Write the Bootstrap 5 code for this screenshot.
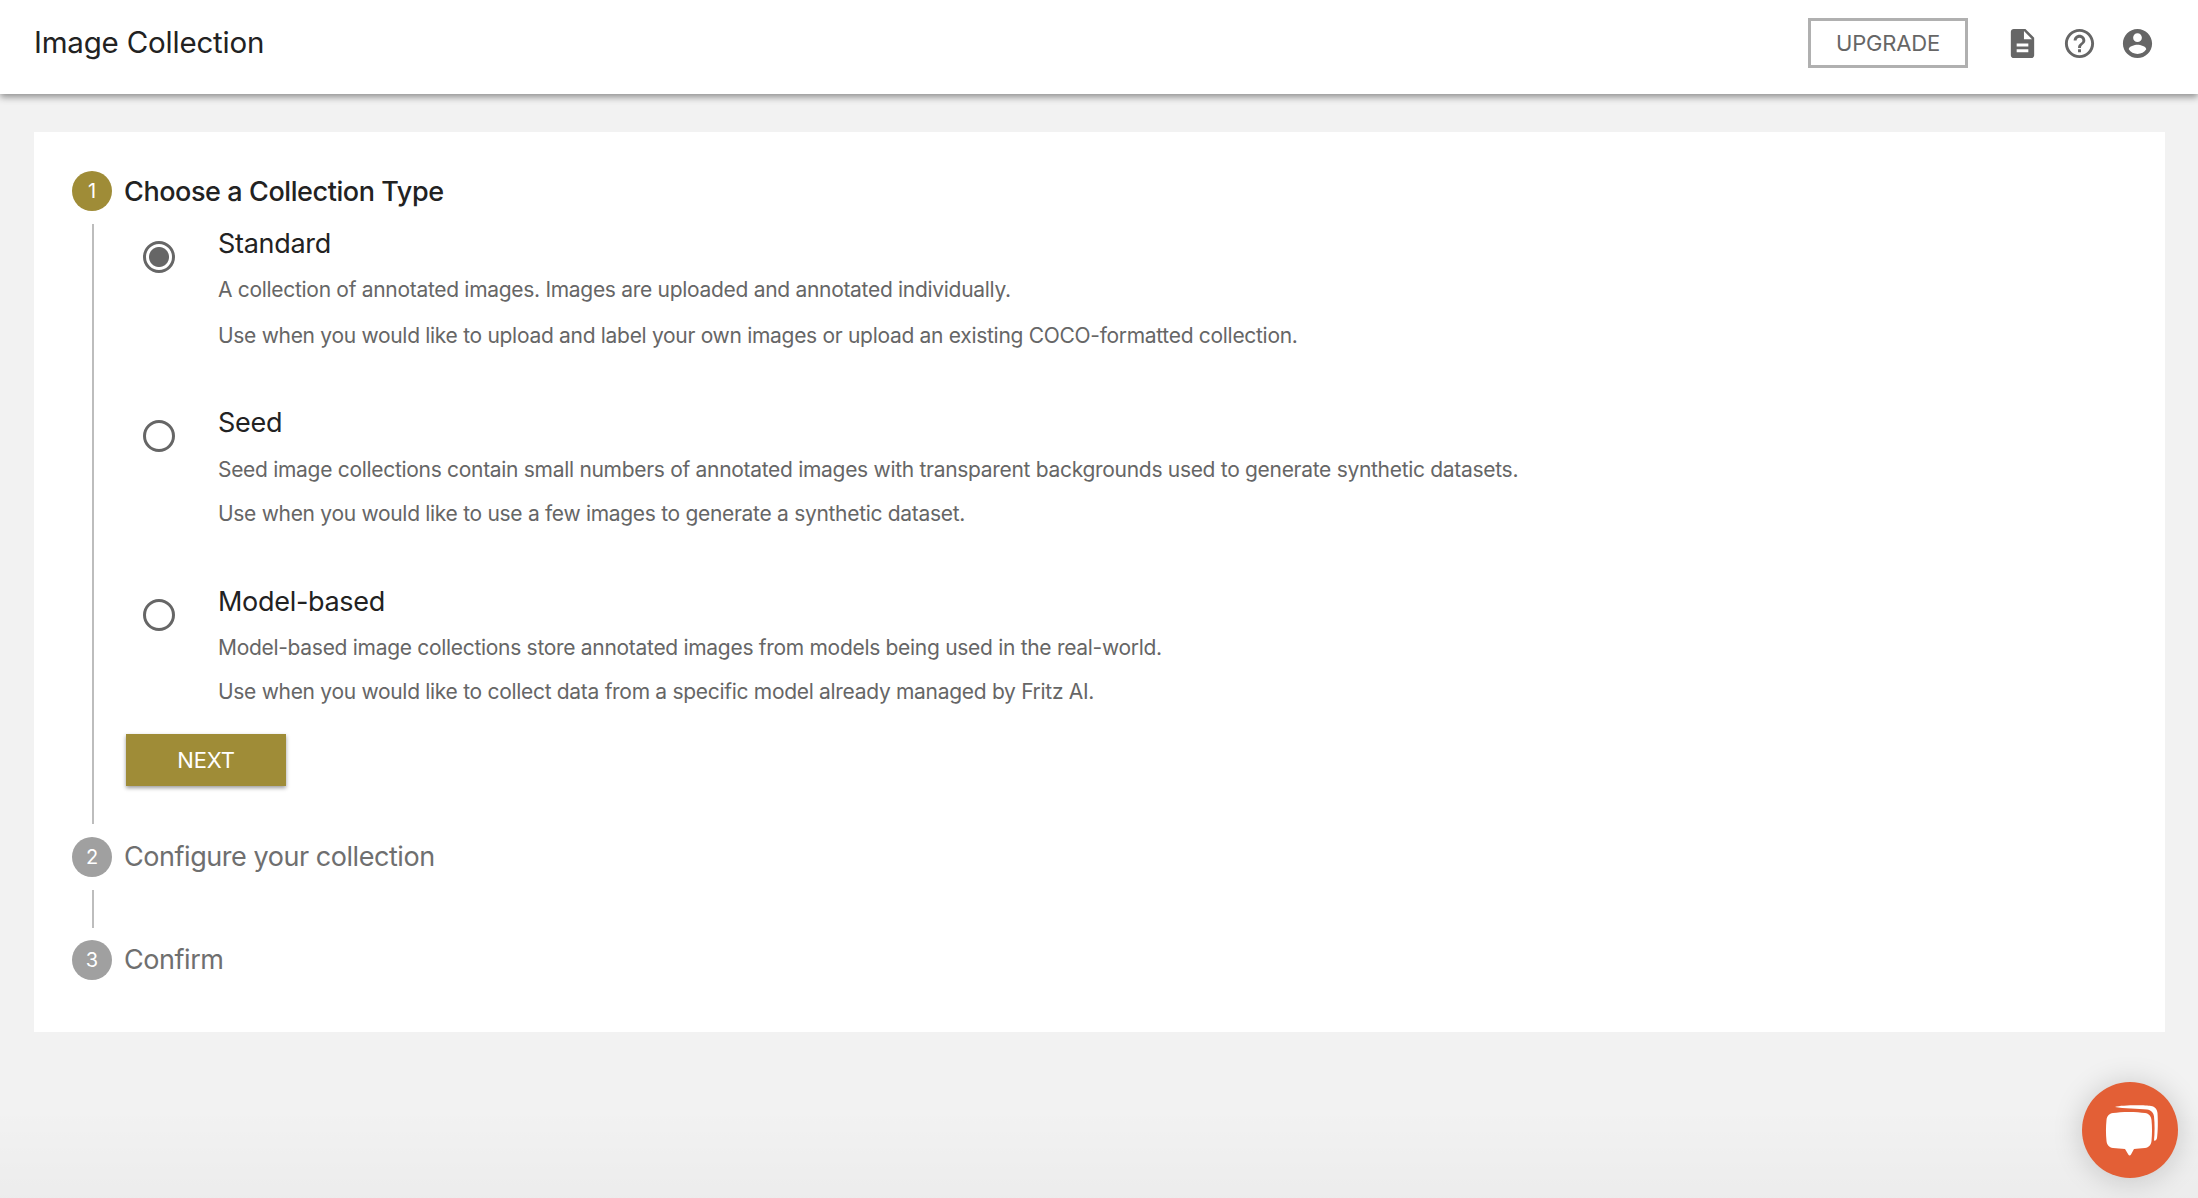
<!DOCTYPE html>
<html lang="en">
<head>
<meta charset="utf-8">
<title>Image Collection</title>
<link href="https://cdn.jsdelivr.net/npm/bootstrap@5.3.0/dist/css/bootstrap.min.css" rel="stylesheet">
<style>
html,body{height:100%}
body{background:#f2f2f2;font-family:Inter,"Liberation Sans",sans-serif;overflow:hidden;position:relative}
.app-head{height:94px;background:#fff;box-shadow:0 3px 7px rgba(0,0,0,.42);padding:0 34px 8px;position:relative}
.app-title{font-size:29.5px;color:#222;margin:0;font-weight:400;letter-spacing:-.2px}
.up-btn{width:160px;height:50px;border:3px solid #b0b0b0;border-radius:0;color:#666;font-size:22px;padding:0;margin-right:36.5px;background:#fff;letter-spacing:-.2px}
.head-icons{gap:22.5px;margin-right:9.5px}
.head-icons svg{width:35px;height:35px;display:block;fill:#666}
.sheet{margin:38px 33px 0 34px;height:900px;background:#fff;padding:40px 38px}
.step-row{gap:12px;height:38px}
.step-num{width:40px;height:40px;border-radius:50%;background:#a0a0a0;color:#fff;font-size:20px;flex:none}
.step-num.on{background:#9f8c37}
.step-name{font-size:27px;color:#6f6f6f;letter-spacing:-.45px}
.step-name.on{color:#222;font-weight:500;letter-spacing:-.42px;padding-top:2px}
.rail{margin-left:20px;border-left:2px solid #bdbdbd}
.rail-main{margin-top:14px;height:600px;padding:0 0 0 32px}
.rail-small{margin-top:14px;height:38px;margin-bottom:13px}
.step-gap{margin-top:14px}
.opt{padding-left:17px}
.opt-a{height:178.500px}
.opt-b{height:179.500px}
.opt-c{height:152px}
.opt-radio{width:32px;height:32px;border:3px solid #666;border-radius:50%;flex:none;margin:17px 43px 0 0;background:#fff}
.opt-radio.sel{background:radial-gradient(circle,#666 0 9.5px,#fff 10.5px)}
.opt-name{font-size:27px;line-height:40px;color:#222;letter-spacing:-.3px}
.opt-desc{font-size:21px;line-height:32px;color:#666;margin:14px 0 0;letter-spacing:-.3px}
.opt-name + .opt-desc{margin-top:10px}
.opt-b .opt-name + .opt-desc{margin-top:11px}
.opt-b .opt-desc + .opt-desc,.opt-c .opt-desc + .opt-desc{margin-top:12px}
.next-btn{width:160px;height:52px;background:#9f8c37;color:#fff;border:0;border-radius:0;font-size:22px;padding:0;box-shadow:0 2px 4px rgba(0,0,0,.4);letter-spacing:-.2px}
.chat-bub{width:96px;height:96px;border-radius:50%;background:#e35f36;position:absolute;left:2082px;top:1082px;box-shadow:0 2px 30px rgba(0,0,0,.18)}
.floor{position:absolute;left:0;right:0;bottom:0;height:90px;background:linear-gradient(to bottom,rgba(0,0,0,0),rgba(0,0,0,.025))}
</style>
</head>
<body>
<div class="floor"></div>
<header class="app-head d-flex align-items-center justify-content-between">
  <h1 class="app-title">Image Collection</h1>
  <div class="d-flex align-items-center">
    <button class="btn up-btn" type="button">UPGRADE</button>
    <div class="head-icons d-flex align-items-center">
      <svg viewBox="0 0 24 24"><path d="M14 2H6c-1.1 0-2 .9-2 2v16c0 1.1.9 2 2 2h12c1.100 0 2-.9 2-2V8l-6-6zm2 16H8v-2h8v2zm0-4H8v-2h8v2zm-3-5V3.500L18.500 9H13z"/></svg>
      <svg viewBox="0 0 24 24"><path d="M11 18h2v-2h-2v2zm1-16C6.480 2 2 6.480 2 12s4.480 10 10 10 10-4.480 10-10S17.520 2 12 2zm0 18c-4.410 0-8-3.590-8-8s3.590-8 8-8 8 3.590 8 8-3.590 8-8 8zm0-14c-2.210 0-4 1.790-4 4h2c0-1.100.9-2 2-2s2 .9 2 2c0 2-3 1.750-3 5h2c0-2.250 3-2.500 3-5 0-2.210-1.790-4-4-4z"/></svg>
      <svg viewBox="0 0 24 24"><path d="M12 2C6.480 2 2 6.480 2 12s4.480 10 10 10 10-4.480 10-10S17.520 2 12 2zm0 3c1.660 0 3 1.340 3 3s-1.340 3-3 3-3-1.340-3-3 1.340-3 3-3zm0 14.200c-2.500 0-4.710-1.280-6-3.220.03-1.990 4-3.080 6-3.080 1.990 0 5.970 1.090 6 3.080-1.290 1.940-3.500 3.220-6 3.220z"/></svg>
    </div>
  </div>
</header>
<main class="sheet">
  <div class="step-row d-flex align-items-center">
    <span class="step-num on d-flex align-items-center justify-content-center">1</span>
    <span class="step-name on">Choose a Collection Type</span>
  </div>
  <div class="rail rail-main">
    <div class="opt opt-a d-flex">
      <span class="opt-radio sel"></span>
      <div>
        <div class="opt-name">Standard</div>
        <p class="opt-desc">A collection of annotated images. Images are uploaded and annotated individually.</p>
        <p class="opt-desc">Use when you would like to upload and label your own images or upload an existing COCO-formatted collection.</p>
      </div>
    </div>
    <div class="opt opt-b d-flex">
      <span class="opt-radio"></span>
      <div>
        <div class="opt-name">Seed</div>
        <p class="opt-desc">Seed image collections contain small numbers of annotated images with transparent backgrounds used to generate synthetic datasets.</p>
        <p class="opt-desc">Use when you would like to use a few images to generate a synthetic dataset.</p>
      </div>
    </div>
    <div class="opt opt-c d-flex">
      <span class="opt-radio"></span>
      <div>
        <div class="opt-name">Model-based</div>
        <p class="opt-desc">Model-based image collections store annotated images from models being used in the real-world.</p>
        <p class="opt-desc">Use when you would like to collect data from a specific model already managed by Fritz AI.</p>
      </div>
    </div>
    <button class="btn next-btn" type="button">NEXT</button>
  </div>
  <div class="step-row d-flex align-items-center step-gap">
    <span class="step-num d-flex align-items-center justify-content-center">2</span>
    <span class="step-name">Configure your collection</span>
  </div>
  <div class="rail rail-small"></div>
  <div class="step-row d-flex align-items-center">
    <span class="step-num d-flex align-items-center justify-content-center">3</span>
    <span class="step-name">Confirm</span>
  </div>
</main>
<div class="chat-bub">
  <svg width="96" height="96" viewBox="0 0 96 96" fill="#fff">
    <path d="M33 25c6-2 30-2 36-1 4 .5 6 3 6.500 7 .5 8 .5 18-.5 25-.3 2-2 3-3 2.500.8-7 .8-17 0-24-.5-4-3-6.500-7-7-8-1-24-1-32-2.500z"/>
    <path d="M31 31c8-1.500 24-1.500 32 0 4 .8 6 3 6.500 7 .7 7 .7 14 0 21-.5 4-2.500 6.500-6.500 7-4 .5-8 .8-11 1l-3 5.500c-.7 1.200-2 1.200-2.700 0L43 67c-4-.2-8-.5-12-1-4-.5-6-3-6.500-7-.7-7-.7-14 0-21 .5-4 2.500-6.200 6.500-7z"/>
  </svg>
</div>
<script src="https://cdn.jsdelivr.net/npm/bootstrap@5.3.0/dist/js/bootstrap.bundle.min.js"></script>
</body>
</html>
